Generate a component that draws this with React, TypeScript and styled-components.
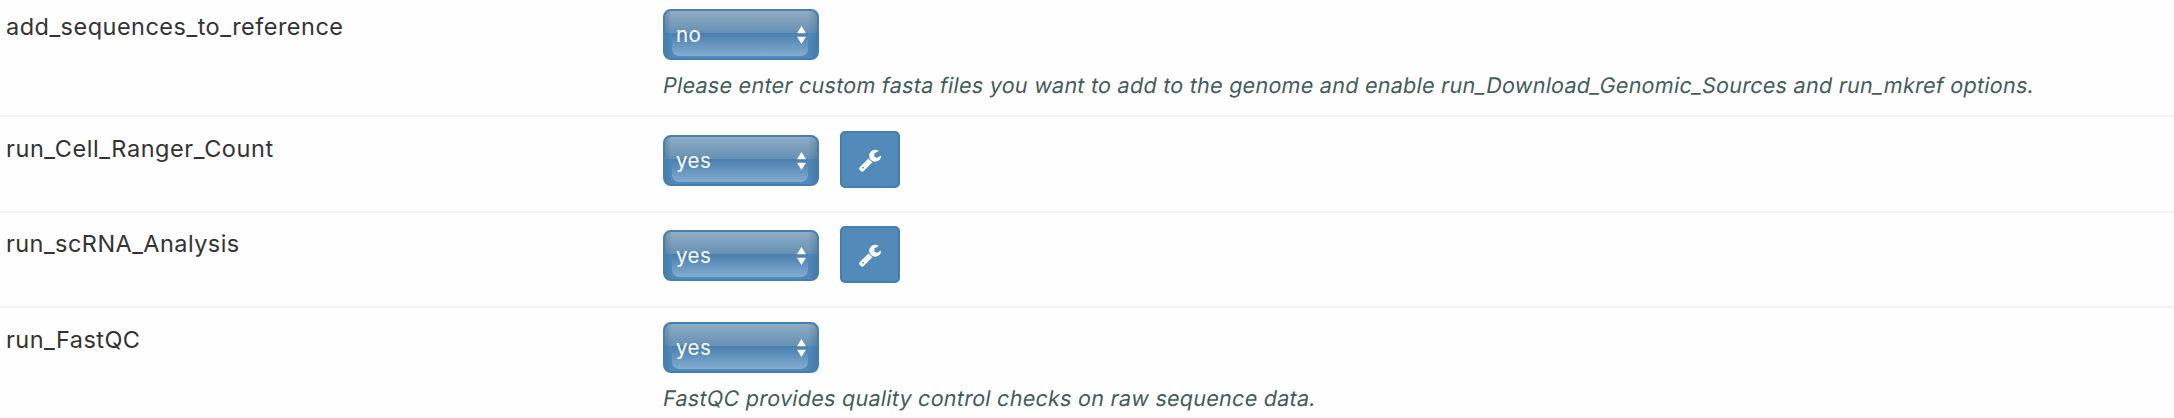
import React from 'react';
import styled, { createGlobalStyle } from 'styled-components';

const GlobalStyle = createGlobalStyle`
  body {
    margin: 0;
    background: #fefefe;
    font-family: Inter, 'Liberation Sans', sans-serif;
    overflow: hidden;
  }
`;

const Form = styled.div`
  display: flex;
  flex-direction: column;
  height: 418px;
  overflow: hidden;
`;

const Row = styled.div<{ $height: number }>`
  display: flex;
  align-items: flex-start;
  box-sizing: border-box;
  height: ${(p) => p.$height}px;
  flex: none;
  border-bottom: 2px solid #f2f2f2;
`;

const Label = styled.label<{ $top: number; $spacing: number }>`
  width: 657px;
  flex: none;
  padding-left: 6px;
  margin-top: ${(p) => p.$top}px;
  font-size: 23.5px;
  line-height: 30px;
  letter-spacing: ${(p) => p.$spacing}px;
  color: #333;
`;

const Field = styled.div<{ $top: number }>`
  display: flex;
  flex-direction: column;
  padding-top: ${(p) => p.$top}px;
`;

const Controls = styled.div`
  display: flex;
  align-items: flex-end;
  gap: 21px;
`;

const SelectBox = styled.button<{ $raise: number }>`
  display: flex;
  align-items: center;
  justify-content: space-between;
  box-sizing: border-box;
  width: 156px;
  height: 51px;
  margin-bottom: ${(p) => p.$raise}px;
  padding: 0 11px;
  border: 2px solid #467fae;
  border-radius: 8px;
  color: #fff;
  font: 400 20.5px/26px Inter, 'Liberation Sans', sans-serif;
  letter-spacing: 0.5px;
  text-align: left;
  background:
    linear-gradient(to right, rgba(50, 90, 125, 0.3), transparent 7px, transparent 143px, rgba(50, 90, 125, 0.3)),
    linear-gradient(#90acc4, #6691b5) 0 0 / 100% 22px no-repeat,
    #508abb;
  position: relative;

  &::after {
    content: '';
    position: absolute;
    left: 7px;
    right: 9px;
    top: 22px;
    bottom: 2px;
    border-radius: 0 0 7px 7px;
    background: linear-gradient(#487eae, #84acd0);
  }
`;

const Value = styled.span`
  position: relative;
  z-index: 1;
`;

const Arrows = styled.svg`
  position: relative;
  z-index: 1;
  display: block;
`;

const ToolButton = styled.button`
  display: flex;
  align-items: center;
  justify-content: center;
  box-sizing: border-box;
  width: 60px;
  height: 57px;
  padding: 0;
  border: 2px solid #467fae;
  border-radius: 5px;
  background: #528bba;
  color: #fff;
`;

const Hint = styled.p`
  margin: 11px 0 0 -1px;
  font-size: 21.5px;
  line-height: 28px;
  letter-spacing: 0.275px;
  color: #435c5a;
  white-space: nowrap;
  transform: skewX(-10deg);
  transform-origin: 0 22px;
`;

const Select = ({ value, raise = 0 }: { value: string; raise?: number }) => (
  <SelectBox type="button" $raise={raise}>
    <Value>{value}</Value>
    <Arrows width="9" height="18" viewBox="0 0 9 18" fill="#fff">
      <path d="M4.5 0 9 7.3H0zM0 10.8h9L4.5 18z" />
    </Arrows>
  </SelectBox>
);

const Wrench = () => (
  <svg width="24" height="24" viewBox="0 0 1792 1792" fill="currentColor">
    <path d="M448 1472q0-26-19-45t-45-19-45 19-19 45 19 45 45 19 45-19 19-45zm644-420l-682 682q-37 37-90 37-52 0-91-37l-106-108q-38-36-38-90 0-53 38-91l681-681q39 98 114.5 173.5t173.5 114.5zm634-435q0 39-23 106-47 134-164.5 217.5t-258.5 83.5q-185 0-316.5-131.5t-131.5-316.5 131.5-316.5 316.5-131.5q58 0 121.5 16.5t107.5 46.5q16 11 16 28t-16 28l-293 169v224l193 107q5-3 79-48.5t135.5-81 70.5-35.5q15 0 23.5 10t8.5 25z" />
  </svg>
);

interface Option {
  name: string;
  value: string;
  height: number;
  labelTop: number;
  labelSpacing: number;
  fieldTop: number;
  settings?: boolean;
  hint?: string;
}

const options: Option[] = [
  {
    name: 'add_sequences_to_reference', value: 'no', height: 117, labelTop: 12, labelSpacing: 0.48, fieldTop: 9,
    hint: 'Please enter custom fasta files you want to add to the genome and enable run_Download_Genomic_Sources and run_mkref options.',
  },
  { name: 'run_Cell_Ranger_Count', value: 'yes', height: 96, labelTop: 17, labelSpacing: 0.57, fieldTop: 14, settings: true },
  { name: 'run_scRNA_Analysis', value: 'yes', height: 95, labelTop: 16, labelSpacing: 0.44, fieldTop: 13, settings: true },
  {
    name: 'run_FastQC', value: 'yes', height: 117, labelTop: 17, labelSpacing: 0.46, fieldTop: 14,
    hint: 'FastQC provides quality control checks on raw sequence data.',
  },
];

export default function App() {
  return (
    <>
      <GlobalStyle />
      <Form>
        {options.map((o) => (
          <Row key={o.name} $height={o.height}>
            <Label $top={o.labelTop} $spacing={o.labelSpacing}>{o.name}</Label>
            <Field $top={o.fieldTop}>
              <Controls>
                <Select value={o.value} raise={o.settings ? 2 : 0} />
                {o.settings && (
                  <ToolButton type="button" aria-label="Settings">
                    <Wrench />
                  </ToolButton>
                )}
              </Controls>
              {o.hint && <Hint>{o.hint}</Hint>}
            </Field>
          </Row>
        ))}
      </Form>
    </>
  );
}
